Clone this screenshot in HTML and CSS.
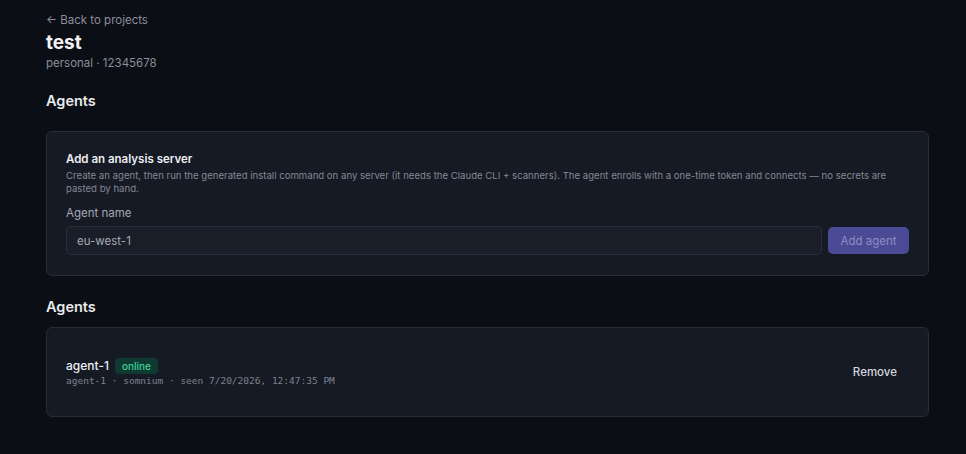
FILE: index.html
```html
<!DOCTYPE html>
<html lang="en">
<head>
    <meta charset="UTF-8">
    <meta name="viewport" content="width=device-width, initial-scale=1.0">
    <title>test · Agents</title>
    <link rel="stylesheet" href="styles.css">
</head>
<body>
    <div class="page">
        <a class="back" href="#">&larr; Back to projects</a>
        <h1>test</h1>
        <div class="sub">personal · 12345678</div>

        <h2>Agents</h2>
        <div class="card add-card">
            <div class="card-title">Add an analysis server</div>
            <p class="desc">Create an agent, then run the generated install command on any server (it needs the Claude CLI + scanners). The agent enrolls with a one-time token and connects — no secrets are pasted by hand.</p>
            <label class="label" for="agent-name">Agent name</label>
            <div class="form-row">
                <input id="agent-name" class="input" type="text" value="eu-west-1">
                <button class="btn-primary" disabled>Add agent</button>
            </div>
        </div>

        <h2 class="list-title">Agents</h2>
        <div class="card list-card">
            <div class="agent-row">
                <div class="agent-info">
                    <div class="agent-name">agent-1 <span class="badge">online</span></div>
                    <div class="agent-meta">agent-1 · somnium · seen 7/20/2026, 12:47:35 PM</div>
                </div>
                <button class="btn-ghost">Remove</button>
            </div>
        </div>
    </div>
</body>
</html>
```

FILE: styles.css
```css
body {
    margin: 0;
    font-family: Inter, "Noto Sans", sans-serif;
    background: #0b0e14;
    color: #e6e8ec;
}

.page {
    padding: 8px 37px 30px 46px;
}

.back {
    display: inline-block;
    font-size: 11.5px;
    color: #8a8f9b;
    text-decoration: none;
    line-height: 14px;
}

h1 {
    margin: 3px 0 0;
    font-size: 19px;
    font-weight: 700;
    line-height: 24px;
    color: #f1f2f4;
}

.sub {
    font-size: 11.5px;
    color: #8a8f9b;
    margin-top: 1px;
    line-height: 14px;
}

h2 {
    margin: 22px 0 0;
    font-size: 14.5px;
    font-weight: 600;
    line-height: 18px;
    color: #e8eaee;
}

.card {
    background: #161a24;
    border: 1px solid #272c37;
    border-radius: 6px;
}

.add-card {
    margin-top: 21px;
    padding: 20px 19px 20px 19px;
}

.card-title {
    font-size: 11.5px;
    font-weight: 600;
    color: #eceef2;
    line-height: 14px;
}

.desc {
    margin: 3px 0 0;
    font-size: 9.6px;
    line-height: 13px;
    color: #838895;
}

.label {
    display: block;
    margin-top: 11px;
    font-size: 11.5px;
    color: #a3a8b3;
    line-height: 14px;
}

.form-row {
    display: flex;
    gap: 6px;
    align-items: center;
    margin-top: 6px;
}

.input {
    flex: 1;
    height: 29px;
    box-sizing: border-box;
    background: #1a1e29;
    border: 1px solid #2a2f3b;
    border-radius: 5px;
    padding: 0 10px;
    font-family: inherit;
    font-size: 11.5px;
    color: #a3a8b3;
    outline: none;
}

.btn-primary {
    height: 27px;
    width: 81px;
    border: none;
    border-radius: 5px;
    background: #4b4b95;
    color: #8d8dc4;
    font-family: inherit;
    font-size: 11.5px;
}

.list-title {
    margin-top: 22px;
}

.list-card {
    margin-top: 11px;
    padding: 29px 31px 29px 19px;
}

.agent-row {
    display: flex;
    justify-content: space-between;
    align-items: center;
}

.agent-name {
    font-size: 12px;
    font-weight: 500;
    color: #eceef2;
    line-height: 17px;
    display: flex;
    align-items: center;
    gap: 6px;
}

.badge {
    font-size: 10px;
    font-weight: 500;
    color: #3ecf95;
    background: #0f3a32;
    border-radius: 4px;
    padding: 1px 7px;
    line-height: 14px;
}

.agent-meta {
    margin-top: 0;
    font-family: "DejaVu Sans Mono", monospace;
    font-size: 9.5px;
    color: #7d828e;
    line-height: 13px;
}

.btn-ghost {
    background: none;
    border: none;
    padding: 0;
    font-family: inherit;
    font-size: 11.5px;
    font-weight: 500;
    color: #d4d7de;
}
```
